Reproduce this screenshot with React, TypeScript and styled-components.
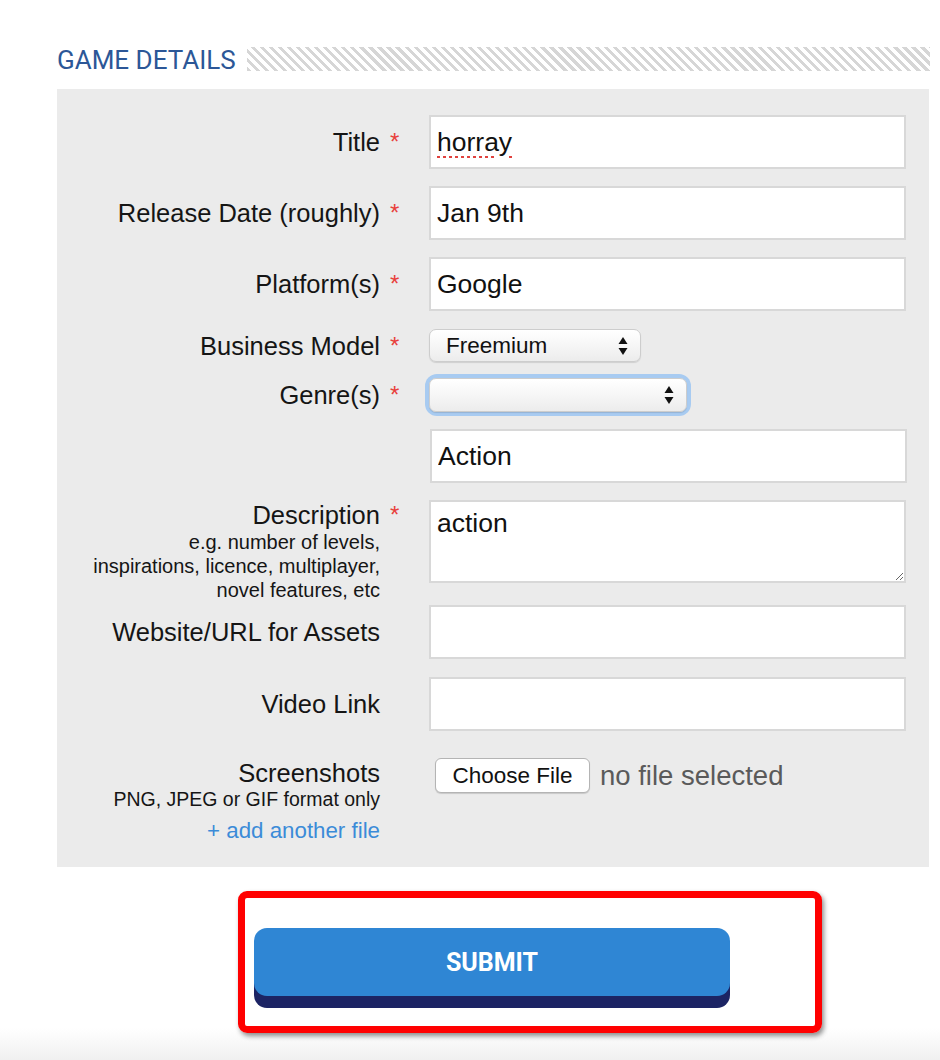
import React from "react";
import styled, { createGlobalStyle } from "styled-components";

const GlobalStyle = createGlobalStyle`
  html, body { margin: 0; padding: 0; background: #ffffff; }
  body { font-family: "Liberation Sans", Arial, sans-serif; color: #151515; }
  * { box-sizing: border-box; }
`;

const Page = styled.div`
  width: 940px;
  min-height: 1060px;
  display: flex;
  flex-direction: column;
  background: linear-gradient(to bottom, #ffffff 0, #ffffff 1028px, #f0f0f0 1060px);
`;

const Section = styled.section`
  padding: 47px 10px 0 57px;
  display: flex;
  flex-direction: column;
`;

const HeadingRow = styled.div`
  display: flex;
  align-items: center;
  gap: 11px;
  height: 24px;
`;

const Heading = styled.h2`
  margin: 0;
  font-family: Roboto, "Liberation Sans", sans-serif;
  font-weight: 400;
  font-size: 26px;
  line-height: 24px;
  color: #2c5797;
  white-space: nowrap;
  padding-top: 2px;
`;

const Stripes = styled.div`
  flex: 1;
  height: 24px;
  background: repeating-linear-gradient(
    45deg,
    #d6d6d6 0px,
    #d6d6d6 3px,
    #ffffff 3px,
    #ffffff 6.4px
  );
`;

const Panel = styled.div`
  margin-top: 18px;
  width: 872px;
  background: #ebebeb;
  padding: 26px 0 24px;
  display: flex;
  flex-direction: column;
`;

const Row = styled.div<{ $mt?: number; $top?: boolean }>`
  display: grid;
  grid-template-columns: 323px 49px 477px;
  align-items: ${(p) => (p.$top ? "start" : "center")};
  margin-top: ${(p) => p.$mt ?? 0}px;
`;

const LabelCell = styled.div`
  display: flex;
  flex-direction: column;
  align-items: flex-end;
  text-align: right;
`;

const Label = styled.label`
  font-size: 25.5px;
  line-height: 30px;
  color: #151515;
  white-space: nowrap;
`;

const Hint = styled.span`
  font-size: 20px;
  line-height: 24px;
  color: #151515;
  white-space: nowrap;
`;

const HintLine = styled.span`
  font-size: 19.5px;
  line-height: 22px;
  color: #151515;
  white-space: nowrap;
`;

const AddLink = styled.a`
  margin-top: 9px;
  font-size: 22.3px;
  line-height: 24px;
  color: #3b8bd8;
  text-decoration: none;
  white-space: nowrap;
`;

const Star = styled.span<{ $top?: boolean }>`
  padding-left: 10px;
  font-size: 24px;
  line-height: 30px;
  color: #e8403c;
  align-self: ${(p) => (p.$top ? "start" : "center")};
`;

const TextInput = styled.input<{ $misspelled?: boolean; $shift?: number }>`
  width: 477px;
  height: 54px;
  margin-left: ${(p) => p.$shift ?? 0}px;
  border: 2px solid #d8d8d8;
  background: #ffffff;
  padding: 0 6px;
  font-family: "Liberation Sans", Arial, sans-serif;
  font-size: 26.5px;
  color: #111;
  outline: none;
  text-decoration: ${(p) => (p.$misspelled ? "underline dotted #e0413d" : "none")};
  text-decoration-thickness: 3px;
  text-underline-offset: 5px;
`;

const TextArea = styled.textarea`
  width: 477px;
  height: 83px;
  border: 2px solid #d8d8d8;
  background: #ffffff;
  padding: 6px 6px;
  font-family: "Liberation Sans", Arial, sans-serif;
  font-size: 26.5px;
  line-height: 30px;
  color: #111;
  outline: none;
  resize: both;
`;

const SelectWrap = styled.div<{ $focused?: boolean }>`
  display: inline-flex;
  justify-self: start;
  border-radius: 8px;
  box-shadow: ${(p) => (p.$focused ? "0 0 0 4px #a8cbf1" : "none")};
`;

const SelectBox = styled.div<{ $w: number; $h: number }>`
  width: ${(p) => p.$w}px;
  height: ${(p) => p.$h}px;
  display: flex;
  align-items: center;
  justify-content: space-between;
  padding: 0 12px 0 16px;
  border-radius: 7px;
  border: 1px solid #cdcdcd;
  background: linear-gradient(to bottom, #ffffff 0%, #f7f7f7 45%, #ececec 100%);
  box-shadow: inset 0 1px 0 #ffffff, 0 1px 1px rgba(0, 0, 0, 0.12);
  font-size: 22.5px;
  color: #111;
`;

const Arrows = () => (
  <svg width="10" height="20" viewBox="0 0 10 20" aria-hidden="true">
    <polygon points="5,1 9.5,8 0.5,8" fill="#111" />
    <polygon points="0.5,12 9.5,12 5,19" fill="#111" />
  </svg>
);

const FileField = styled.div`
  display: flex;
  align-items: center;
  gap: 10px;
  padding-left: 6px;
`;

const FileButton = styled.button`
  height: 35px;
  width: 155px;
  border: 1px solid #b4b4b4;
  border-radius: 6px;
  background: #ffffff;
  box-shadow: 0 1px 1px rgba(0, 0, 0, 0.15);
  font-family: "Liberation Sans", Arial, sans-serif;
  font-size: 22.5px;
  color: #111;
  padding: 0;
`;

const FileStatus = styled.span`
  font-size: 27.5px;
  color: #5a5a5a;
  white-space: nowrap;
`;

const SubmitArea = styled.div`
  padding: 24px 0 0 238px;
  display: flex;
`;

const Highlight = styled.div`
  width: 584px;
  height: 142px;
  border: 7px solid #ff0000;
  border-radius: 9px;
  box-shadow: 2px 3px 5px rgba(0, 0, 0, 0.45);
  padding: 30px 0 0 9px;
`;

const SubmitButton = styled.button`
  width: 476px;
  height: 68px;
  border: none;
  border-radius: 13px;
  background: #2f86d4;
  box-shadow: 0 12px 0 #1c2464;
  color: #ffffff;
  font-family: Roboto, "Liberation Sans", sans-serif;
  font-weight: 700;
  font-size: 25px;
  padding: 0;
`;

export default function App() {
  return (
    <>
      <GlobalStyle />
      <Page>
        <Section>
          <HeadingRow>
            <Heading>GAME DETAILS</Heading>
            <Stripes />
          </HeadingRow>
          <Panel>
            <Row>
              <LabelCell>
                <Label>Title</Label>
              </LabelCell>
              <Star>*</Star>
              <TextInput value="horray" readOnly $misspelled />
            </Row>
            <Row $mt={17}>
              <LabelCell>
                <Label>Release Date (roughly)</Label>
              </LabelCell>
              <Star>*</Star>
              <TextInput value="Jan 9th" readOnly />
            </Row>
            <Row $mt={17}>
              <LabelCell>
                <Label>Platform(s)</Label>
              </LabelCell>
              <Star>*</Star>
              <TextInput value="Google" readOnly />
            </Row>
            <Row $mt={18}>
              <LabelCell>
                <Label>Business Model</Label>
              </LabelCell>
              <Star>*</Star>
              <SelectWrap>
                <SelectBox $w={212} $h={33} role="combobox">
                  <span>Freemium</span>
                  <Arrows />
                </SelectBox>
              </SelectWrap>
            </Row>
            <Row $mt={16}>
              <LabelCell>
                <Label>Genre(s)</Label>
              </LabelCell>
              <Star>*</Star>
              <SelectWrap $focused>
                <SelectBox $w={258} $h={34} role="combobox">
                  <span />
                  <Arrows />
                </SelectBox>
              </SelectWrap>
            </Row>
            <Row $mt={17}>
              <LabelCell />
              <span />
              <TextInput value="Action" readOnly $shift={1} />
            </Row>
            <Row $mt={17} $top>
              <LabelCell>
                <Label>Description</Label>
                <Hint>
                  e.g. number of levels,
                  <br />
                  inspirations, licence, multiplayer,
                  <br />
                  novel features, etc
                </Hint>
              </LabelCell>
              <Star $top>*</Star>
              <TextArea value="action" readOnly />
            </Row>
            <Row $mt={3}>
              <LabelCell>
                <Label>Website/URL for Assets</Label>
              </LabelCell>
              <span />
              <TextInput value="" readOnly />
            </Row>
            <Row $mt={18}>
              <LabelCell>
                <Label>Video Link</Label>
              </LabelCell>
              <span />
              <TextInput value="" readOnly />
            </Row>
            <Row $mt={27} $top>
              <LabelCell>
                <Label>Screenshots</Label>
                <HintLine>PNG, JPEG or GIF format only</HintLine>
                <AddLink href="#">+ add another file</AddLink>
              </LabelCell>
              <span />
              <FileField>
                <FileButton type="button">Choose File</FileButton>
                <FileStatus>no file selected</FileStatus>
              </FileField>
            </Row>
          </Panel>
        </Section>
        <SubmitArea>
          <Highlight>
            <SubmitButton type="button">SUBMIT</SubmitButton>
          </Highlight>
        </SubmitArea>
      </Page>
    </>
  );
}
